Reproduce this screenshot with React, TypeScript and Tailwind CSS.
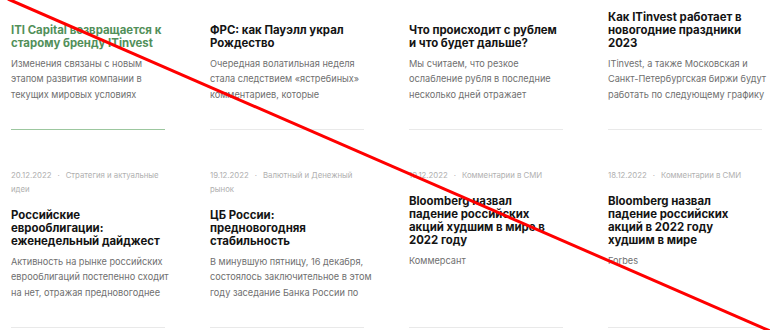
import React from 'react'

type Card = {
  meta?: { date: string; tag: string[] }
  title: string[]
  desc: string[]
  active?: boolean
}

const topRow: Card[] = [
  {
    title: ['ITI Capital возвращается к', 'старому бренду ITinvest'],
    desc: ['Изменения связаны с новым', 'этапом развития компании в', 'текущих мировых условиях'],
    active: true,
  },
  {
    title: ['ФРС: как Пауэлл украл', 'Рождество'],
    desc: ['Очередная волатильная неделя', 'стала следствием «ястребиных»', 'комментариев, которые'],
  },
  {
    title: ['Что происходит с рублем', 'и что будет дальше?'],
    desc: ['Мы считаем, что резкое', 'ослабление рубля в последние', 'несколько дней отражает'],
  },
  {
    title: ['Как ITinvest работает в', 'новогодние праздники', '2023'],
    desc: ['ITinvest, а также Московская и', 'Санкт-Петербургская биржи будут', 'работать по следующему графику'],
  },
]

const bottomRow: Card[] = [
  {
    meta: { date: '20.12.2022', tag: ['Стратегия и актуальные', 'идеи'] },
    title: ['Российские', 'еврооблигации:', 'еженедельный дайджест'],
    desc: ['Активность на рынке российских', 'еврооблигаций постепенно сходит', 'на нет, отражая предновогоднее'],
  },
  {
    meta: { date: '19.12.2022', tag: ['Валютный и Денежный', 'рынок'] },
    title: ['ЦБ России:', 'предновогодняя', 'стабильность'],
    desc: ['В минувшую пятницу, 16 декабря,', 'состоялось заключительное в этом', 'году заседание Банка России по'],
  },
  {
    meta: { date: '19.12.2022', tag: ['Комментарии в СМИ'] },
    title: ['Bloomberg назвал', 'падение российских', 'акций худшим в мире в', '2022 году'],
    desc: ['Коммерсант'],
  },
  {
    meta: { date: '18.12.2022', tag: ['Комментарии в СМИ'] },
    title: ['Bloomberg назвал', 'падение российских', 'акций в 2022 году', 'худшим в мире'],
    desc: ['Forbes'],
  },
]

const Lines = ({ lines }: { lines: string[] }) => (
  <>
    {lines.map((l, i) => (
      <span key={i} className="block whitespace-nowrap">
        {l}
      </span>
    ))}
  </>
)

const NewsCard = ({ card, top }: { card: Card; top?: boolean }) => {
  return (
    <div className="flex flex-col">
      {card.meta && (
        <div className="text-[7.8px] leading-[14px] text-[#b0b0b0] mb-[13px]">
          <span className="block whitespace-nowrap">
            {card.meta.date}
            <span className="mx-[6px]">·</span>
            {card.meta.tag[0]}
          </span>
          {card.meta.tag[1] && <span className="block">{card.meta.tag[1]}</span>}
        </div>
      )}
      <div
        className={`flex flex-col justify-end text-[11.4px] leading-[13px] font-bold ${
          top ? 'h-[39px]' : ''
        } ${card.active ? 'text-[#52905a]' : 'text-[#141414]'}`}
      >
        <Lines lines={card.title} />
      </div>
      <div className="mt-[6px] text-[9.2px] leading-[15.5px] text-[#6f6f6f]">
        <Lines lines={card.desc} />
      </div>
      <div className="mt-auto pt-[26.5px]">
        <div className={`h-px ${card.active ? 'bg-[#9cc79f]' : 'bg-[#e9e9e9]'}`} />
      </div>
    </div>
  )
}

const App = () => {
  return (
    <div
      className="relative w-[770px] h-[330px] overflow-hidden bg-white"
      style={{ fontFamily: 'Inter, "Noto Sans", sans-serif' }}
    >
      <div className="pl-[11px] pr-[8px] pt-[10.5px]">
        <div className="grid grid-cols-4 gap-x-[45px]">
          {topRow.map((c, i) => (
            <NewsCard key={i} card={c} top />
          ))}
        </div>
        <div className="grid grid-cols-4 gap-x-[45px] mt-[38px]">
          {bottomRow.map((c, i) => (
            <NewsCard key={i} card={c} />
          ))}
        </div>
      </div>
      <svg className="absolute inset-0 pointer-events-none" width="770" height="330">
        <line x1="8" y1="-1" x2="770" y2="331" stroke="#ff0000" strokeWidth="3" />
      </svg>
    </div>
  )
}

export default App
